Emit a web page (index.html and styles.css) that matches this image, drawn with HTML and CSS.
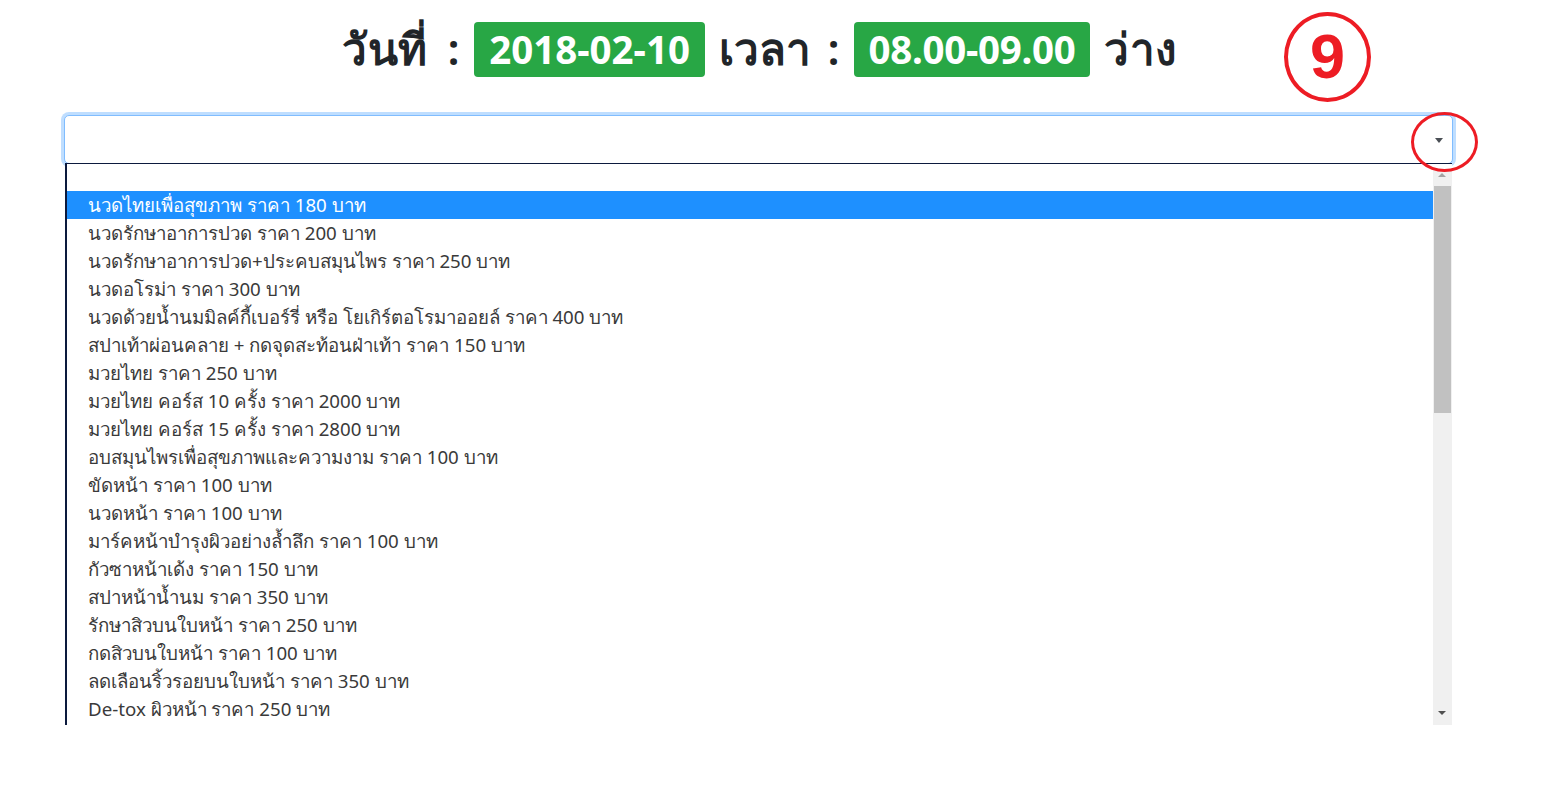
FILE: index.html
```html
<!DOCTYPE html>
<html lang="th">
<head>
<meta charset="utf-8">
<title>จองคิว</title>
<link rel="stylesheet" href="styles.css">
</head>
<body>
<div class="page">
  <div class="heading-row">
    <h1 class="heading">
      <span class="label">วันที่ :</span>
      <span class="badge">2018-02-10</span>
      <span class="label label-tight">เวลา :</span>
      <span class="badge badge-tight">08.00-09.00</span>
      <span class="label">ว่าง</span>
    </h1>
    <div class="step-mark">9</div>
  </div>

  <div class="field">
    <div class="select">
      <span class="select-arrow"></span>
    </div>
    <div class="arrow-ring"></div>
    <div class="listbox">
      <ul class="options">
        <li class="option blank"></li>
        <li class="option selected">นวดไทยเพื่อสุขภาพ ราคา 180 บาท</li>
        <li class="option">นวดรักษาอาการปวด ราคา 200 บาท</li>
        <li class="option">นวดรักษาอาการปวด+ประคบสมุนไพร ราคา 250 บาท</li>
        <li class="option">นวดอโรม่า ราคา 300 บาท</li>
        <li class="option">นวดด้วยน้ำนมมิลค์กี้เบอร์รี่ หรือ โยเกิร์ตอโรมาออยล์ ราคา 400 บาท</li>
        <li class="option">สปาเท้าผ่อนคลาย + กดจุดสะท้อนฝ่าเท้า ราคา 150 บาท</li>
        <li class="option">มวยไทย ราคา 250 บาท</li>
        <li class="option">มวยไทย คอร์ส 10 ครั้ง ราคา 2000 บาท</li>
        <li class="option">มวยไทย คอร์ส 15 ครั้ง ราคา 2800 บาท</li>
        <li class="option">อบสมุนไพรเพื่อสุขภาพและความงาม ราคา 100 บาท</li>
        <li class="option">ขัดหน้า ราคา 100 บาท</li>
        <li class="option">นวดหน้า ราคา 100 บาท</li>
        <li class="option">มาร์คหน้าบำรุงผิวอย่างล้ำลึก ราคา 100 บาท</li>
        <li class="option">กัวซาหน้าเด้ง ราคา 150 บาท</li>
        <li class="option">สปาหน้าน้ำนม ราคา 350 บาท</li>
        <li class="option">รักษาสิวบนใบหน้า ราคา 250 บาท</li>
        <li class="option">กดสิวบนใบหน้า ราคา 100 บาท</li>
        <li class="option">ลดเลือนริ้วรอยบนใบหน้า ราคา 350 บาท</li>
        <li class="option">De-tox ผิวหน้า ราคา 250 บาท</li>
      </ul>
      <div class="scrollbar">
        <span class="sb-up"></span>
        <span class="sb-thumb"></span>
        <span class="sb-down"></span>
      </div>
    </div>
  </div>
</div>
</body>
</html>
```

FILE: styles.css
```css
* { box-sizing: border-box; }

html, body {
  margin: 0;
  padding: 0;
  background: #fff;
}

body {
  font-family: "Noto Sans", "Open Sans", "DejaVu Sans", sans-serif;
  color: #212529;
}

.page {
  width: 1541px;
  height: 795px;
  position: relative;
}

.heading-row {
  height: 115px;
  position: relative;
  display: flex;
  justify-content: center;
}

.heading {
  margin: 22px 0 0 -22px;
  display: flex;
  align-items: center;
  gap: 14px;
  height: 55px;
  font-size: 40px;
  font-weight: 500;
  line-height: 1;
  color: #212529;
}

.label {
  font-size: 44px;
  font-weight: 600;
  letter-spacing: 0.5px;
  word-spacing: 8px;
  padding-bottom: 4px;
}

.label-tight {
  letter-spacing: 0;
  word-spacing: 5px;
}

.badge {
  display: inline-flex;
  align-items: center;
  height: 55px;
  padding: 0 15px;
  background: #28a745;
  color: #fff;
  border-radius: 4px;
  font-weight: 700;
  font-size: 38.5px;
}

.badge-tight {
  letter-spacing: -0.3px;
}

.step-mark {
  position: absolute;
  left: 1284px;
  top: 12px;
  width: 87px;
  height: 90px;
  border: 4px solid #ed1c24;
  border-radius: 50%;
  color: #ed1c24;
  font-family: "Liberation Sans", Arial, sans-serif;
  font-weight: 700;
  font-size: 63px;
  display: flex;
  align-items: center;
  justify-content: center;
  line-height: 1;
  padding-bottom: 2px;
}

.field {
  position: relative;
  margin-left: 64px;
  width: 1389px;
}

.select {
  height: 49px;
  border: 1px solid #80bdff;
  border-radius: 5px;
  box-shadow: 0 0 0 3px rgba(0, 123, 255, 0.25);
  background: #fff;
  position: relative;
}

.select-arrow {
  position: absolute;
  right: 9px;
  top: 22px;
  width: 0;
  height: 0;
  border-left: 4px solid transparent;
  border-right: 4px solid transparent;
  border-top: 5px solid #4a4f55;
}

.arrow-ring {
  position: absolute;
  left: 1347px;
  top: -3px;
  width: 67px;
  height: 60px;
  border: 3px solid #ed1c24;
  border-radius: 50%;
  z-index: 3;
}

.listbox {
  position: absolute;
  left: 1px;
  top: 48px;
  width: 1387px;
  height: 562px;
  border-left: 2px solid #0c1a3e;
  border-top: 1px solid #0c1a3e;
  background: #fff;
  overflow: hidden;
  z-index: 2;
}

.options {
  list-style: none;
  margin: 0;
  padding: 0;
  margin-right: 19px;
}

.option {
  height: 28px;
  line-height: 28px;
  padding-left: 21px;
  font-family: "Noto Sans", "Open Sans", "DejaVu Sans", sans-serif;
  font-size: 18.7px;
  color: #3a3a3a;
  white-space: nowrap;
}

.option.blank {
  height: 27px;
}

.option.selected {
  background: #1e90ff;
  color: #fff;
}

.scrollbar {
  position: absolute;
  right: 0;
  top: 6px;
  bottom: 0;
  width: 19px;
  background: #f0f0f0;
}

.sb-up {
  position: absolute;
  left: 5px;
  top: 3px;
  border-left: 4px solid transparent;
  border-right: 4px solid transparent;
  border-bottom: 4px solid #a3a3a3;
}

.sb-thumb {
  position: absolute;
  left: 1px;
  right: 1px;
  top: 16px;
  height: 227px;
  background: #c1c1c1;
}

.sb-down {
  position: absolute;
  left: 5px;
  bottom: 10px;
  border-left: 4px solid transparent;
  border-right: 4px solid transparent;
  border-top: 4px solid #505050;
}
```
